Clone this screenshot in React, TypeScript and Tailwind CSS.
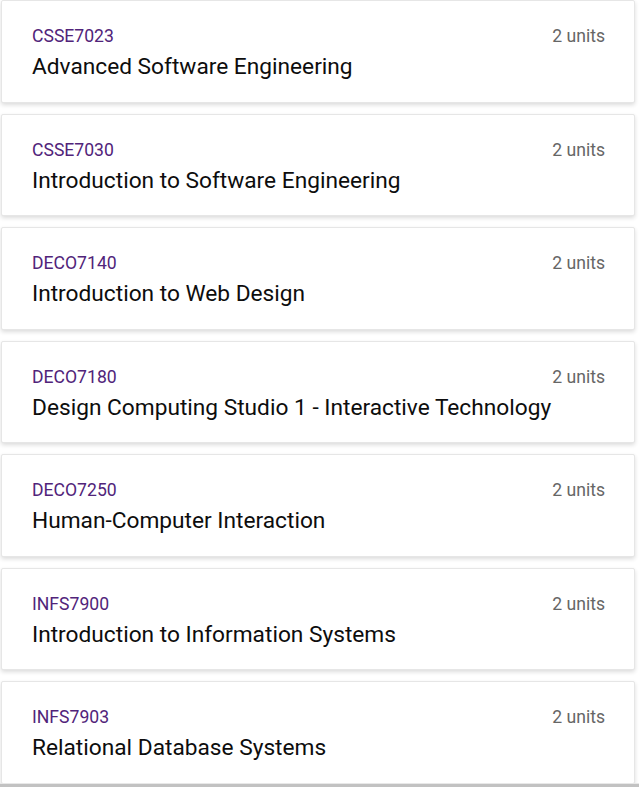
const courses = [
  { code: "CSSE7023", name: "Advanced Software Engineering" },
  { code: "CSSE7030", name: "Introduction to Software Engineering" },
  { code: "DECO7140", name: "Introduction to Web Design" },
  { code: "DECO7180", name: "Design Computing Studio 1 - Interactive Technology" },
  { code: "DECO7250", name: "Human-Computer Interaction" },
  { code: "INFS7900", name: "Introduction to Information Systems" },
  { code: "INFS7903", name: "Relational Database Systems" },
];

const CourseCard = ({ code, name }: { code: string; name: string }) => {
  return (
    <div className="bg-white border border-[#e6e6e6] rounded-[2px] shadow-[0_2px_4px_rgba(0,0,0,0.14)] pl-[30px] pr-[29px] pt-[22px] pb-[19.5px] mb-[11px]">
      <div className="flex items-start justify-between">
        <div className="text-[17.6px] leading-[26px] text-[#51247a]">{code}</div>
        <div className="text-[17.6px] leading-[26px] text-[#666666]">2 units</div>
      </div>
      <div className="mt-[3px] text-[22.7px] leading-[30px] text-[#0d0d0d] font-normal whitespace-nowrap">
        {name}
      </div>
    </div>
  );
};

export default function App() {
  return (
    <div className="relative h-[787px] w-[639px] overflow-hidden bg-white font-['Roboto',sans-serif]">
      <div className="pl-[1px] pr-[4px]">
        {courses.map((c) => (
          <CourseCard key={c.code} code={c.code} name={c.name} />
        ))}
      </div>
      <div className="absolute bottom-0 left-0 right-0 h-[4px] bg-[#c2c2c2] border-t border-[#e8e8e8]" />
    </div>
  );
}
